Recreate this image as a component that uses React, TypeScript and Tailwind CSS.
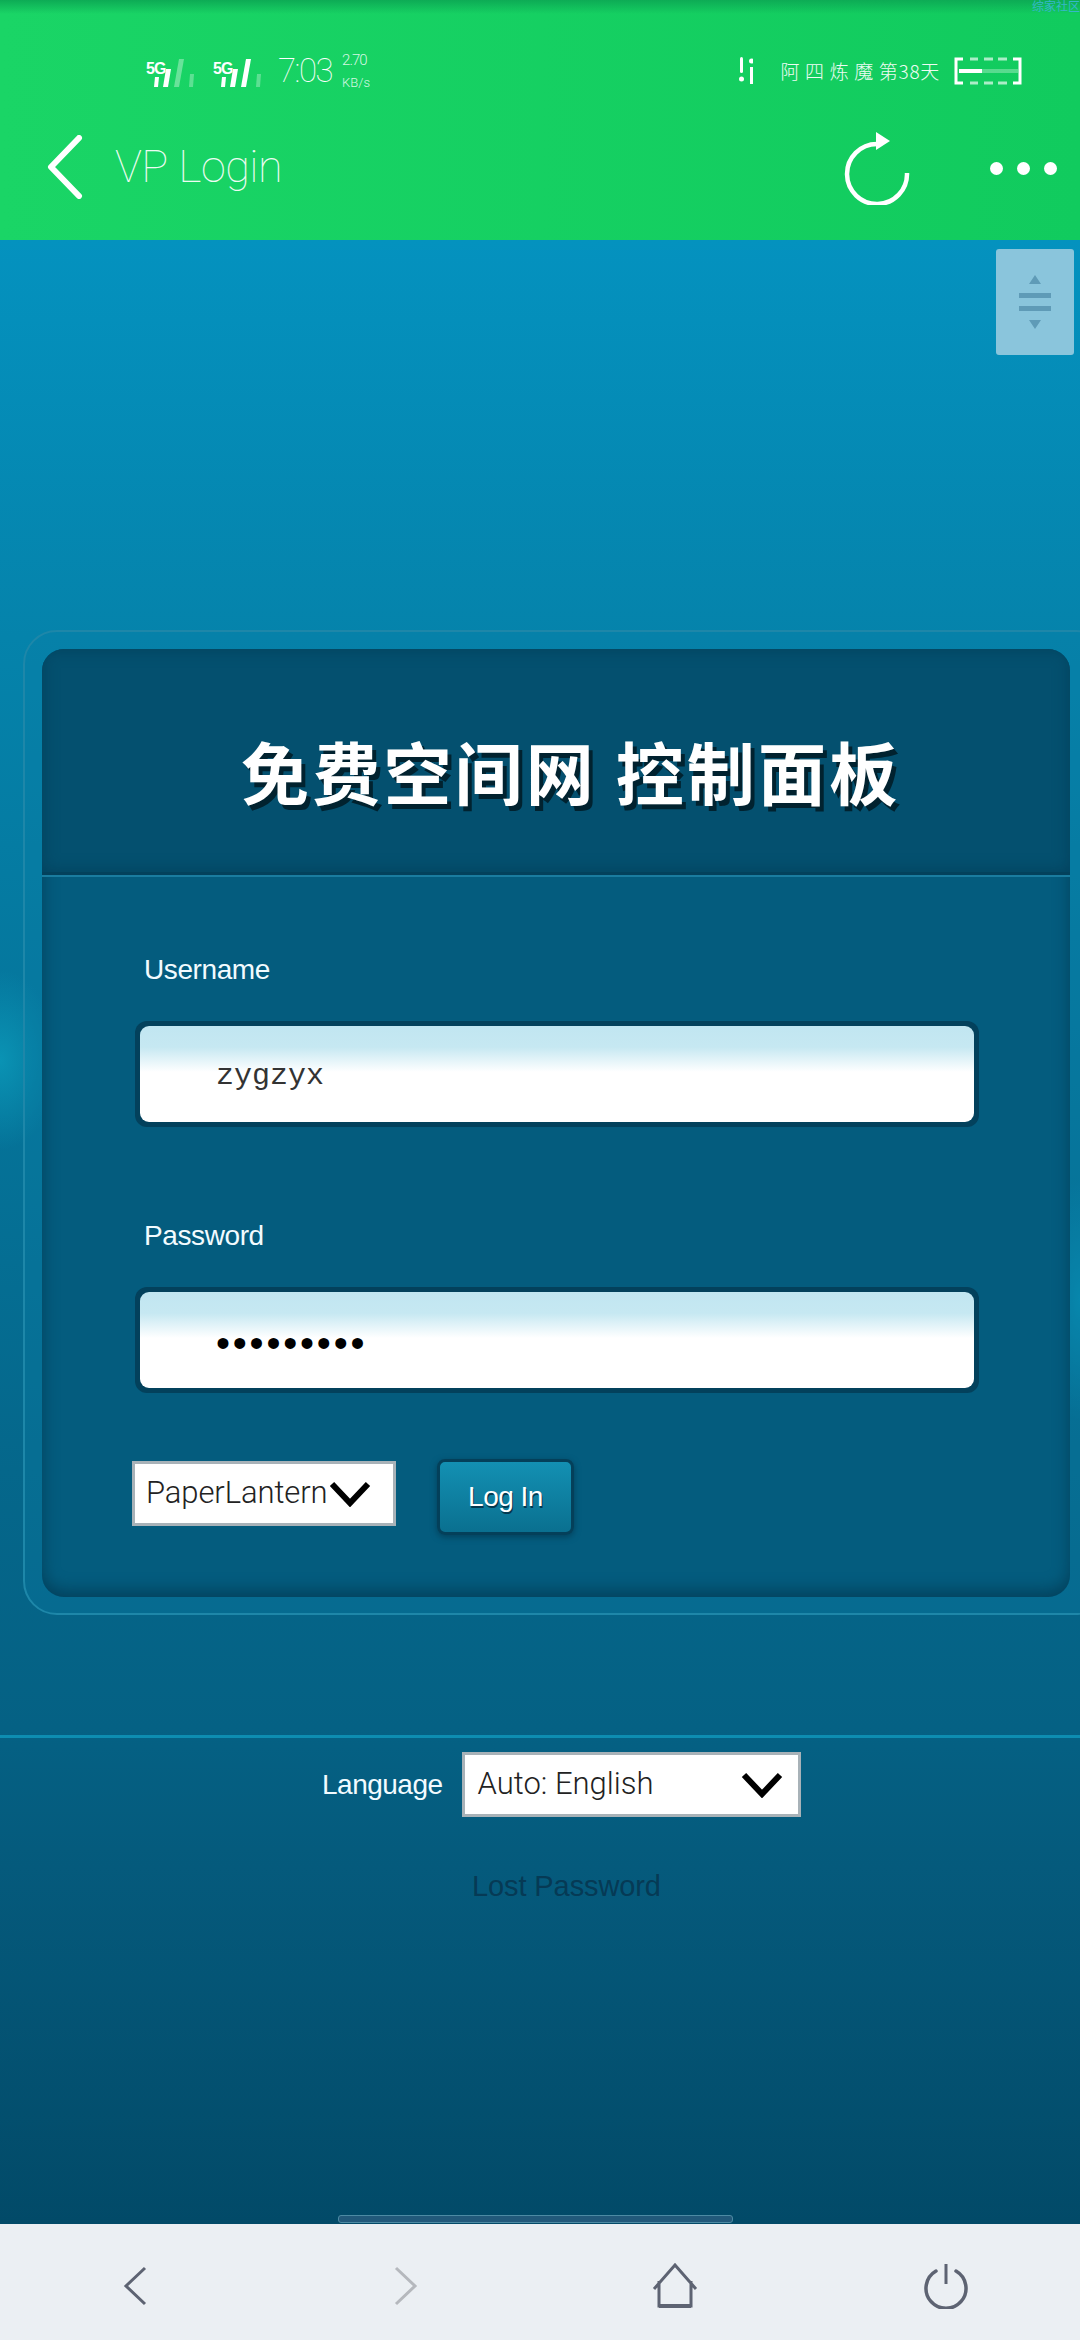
import React from "react";

const Signal = ({ dim }: { dim: number }) => (
  <svg width="54" height="30" viewBox="0 0 54 30" className="mt-[4px] shrink-0">
    <text x="0" y="16" fontFamily="Liberation Sans, sans-serif" fontSize="16" fontWeight="700" fill="#fff" letterSpacing="-1">5G</text>
    <path d="M9 19h4l-1 10H8z" fill="#fff" />
    <path d="M20 11h5l-3 18h-5z" fill="#fff" />
    <path d="M33 1h5l-5 28h-5z" fill="#fff" fillOpacity={dim} />
    <path d="M44 16h4l-1 13h-4z" fill="#fff" fillOpacity="0.3" />
  </svg>
);

const Chevron = () => (
  <svg width="42" height="26" viewBox="0 0 42 26" className="shrink-0">
    <path d="M3 3l18 19L39 3" fill="none" stroke="#000" strokeWidth="6" />
  </svg>
);

const Field = ({ label, children }: { label: string; children: React.ReactNode }) => (
  <div className="flex flex-col">
    <div className="h-[40px] pl-[3px] text-[28px] leading-[40px] tracking-[-0.4px] text-[#f2fbff] font-['Liberation_Sans',sans-serif]">{label}</div>
    <div className="mt-[31px] ml-[-6px] rounded-[12px] bg-[#03415c] p-[5px]">
      <div className="flex h-[96px] items-center rounded-[9px] bg-[linear-gradient(#c1e6f1_0%,#c6e8f2_22%,#ffffff_48%,#ffffff_100%)] pl-[76px]">
        {children}
      </div>
    </div>
  </div>
);

export default function App() {
  return (
    <div className="relative flex h-[2340px] w-[1080px] flex-col overflow-hidden font-['Liberation_Sans','Noto_Sans_CJK_SC',sans-serif]">
      {/* App header */}
      <header className="relative h-[240px] shrink-0 bg-[linear-gradient(90deg,#1ad566,#11cb5e)] text-white">
        <div className="absolute inset-x-0 top-0 h-[14px] bg-[linear-gradient(#0dab55,transparent)]" />
        <span className="absolute right-0 top-0 text-[12px] leading-[14px] text-[#36b7c9]">综家社区</span>
        <div className="flex h-[96px] items-center pl-[146px] pr-[58px] pt-[46px]">
          <Signal dim={0.35} />
          <div className="ml-[13px]"><Signal dim={1} /></div>
          <span className="ml-[11px] font-['Roboto',sans-serif] text-[33px] font-thin tracking-[-1.5px]">7:03</span>
          <div className="ml-[10px] flex flex-col font-['Roboto',sans-serif] font-light leading-[20px] text-[#d5f7e2]">
            <span className="mb-[3px] text-[15px] tracking-[-1px]">2.70</span>
            <span className="text-[13px]">KB/s</span>
          </div>
          <svg width="14" height="28" viewBox="0 0 14 28" className="ml-auto">
            <rect x="1" y="0" width="3" height="16" rx="1.5" fill="#fff" />
            <circle cx="2.5" cy="22" r="2.5" fill="#fff" />
            <rect x="11" y="10" width="3" height="17" fill="#fff" />
            <circle cx="12.5" cy="4" r="2.5" fill="#fff" />
          </svg>
          <span className="ml-[27px] font-['Noto_Sans_CJK_SC',sans-serif] text-[19px] font-light tracking-[0.7px] text-[#eefcf3]">阿 四 炼 魔 第38天</span>
          <svg width="68" height="28" viewBox="0 0 68 28" className="ml-[14px]">
            <path d="M9 2H2v24h7M59 2h7v24h-7" fill="none" stroke="#fff" strokeWidth="3" />
            <rect x="5" y="12" width="23" height="4" fill="#fff" />
            <rect x="28" y="12" width="36" height="4" fill="#fff" fillOpacity="0.3" />
            <path d="M16 2h8m6 0h9m5 0h9M16 26h8m6 0h9m5 0h9" stroke="#fff" strokeOpacity="0.65" strokeWidth="3" fill="none" />
          </svg>
        </div>
        <div className="flex h-[144px] items-center pb-[2px] pl-[47px] pr-[23px]">
          <svg width="36" height="64" viewBox="0 0 36 64">
            <path d="M32 3L4 32l28 29" fill="none" stroke="#fff" strokeWidth="6" strokeLinecap="round" strokeLinejoin="round" />
          </svg>
          <span className="ml-[32px] font-['Roboto',sans-serif] text-[45px] font-thin tracking-[-0.5px] text-[#eefcf3]">VP Login</span>
          <svg width="68" height="74" viewBox="0 0 68 74" className="ml-auto mt-[2px]">
            <path d="M64 42A30 30 0 1 1 34 13" fill="none" stroke="#fff" strokeWidth="4.5" />
            <path d="M33 1l14 9-14 9z" fill="#fff" />
          </svg>
          <div className="ml-[79px] mt-[2px] flex gap-[14px]">
            <span className="h-[13px] w-[13px] rounded-full bg-white" />
            <span className="h-[13px] w-[13px] rounded-full bg-white" />
            <span className="h-[13px] w-[13px] rounded-full bg-white" />
          </div>
        </div>
      </header>

      {/* Page */}
      <main className="relative flex min-h-0 flex-1 flex-col bg-[radial-gradient(ellipse_60px_90px_at_0px_820px,#0a93b4,transparent),radial-gradient(ellipse_40px_120px_at_1080px_1060px,#078bb0,transparent),linear-gradient(#0492bf_0%,#0583ab_20%,#05678b_62%,#056184_75%,#055a7c_82%,#024a68_100%)] pt-[390px]">
        {/* Floating scroller */}
        <div className="absolute right-[6px] top-[9px] flex h-[106px] w-[78px] flex-col items-center justify-center rounded-[3px] bg-[#8ac5dc]">
          <svg width="32" height="54" viewBox="0 0 32 54">
            <path d="M16 0l6 9H10zM16 54l-6-9h12z" fill="#5f9bb7" />
            <rect x="0" y="18" width="32" height="5" fill="#5f9bb7" />
            <rect x="0" y="31" width="32" height="5" fill="#5f9bb7" />
          </svg>
        </div>

        {/* Login panel */}
        <section className="ml-[23px] mr-[-30px] rounded-[34px] border-[2px] border-[#1e87a9] bg-[#0a7ea4]/30 pb-[16px] pl-[17px] pr-[38px] pt-[17px]">
          <div className="overflow-hidden rounded-[22px] bg-[#045c7e] shadow-[inset_0_-6px_16px_#03415c]">
            <div className="flex h-[226px] items-center border-b-[3px] border-[#03415c] bg-[#04506f] pl-[199px] pt-[20px] shadow-[inset_0_0_16px_#03415c,0_2px_0_#1a7c9f]">
              <h1 className="whitespace-nowrap text-[68px] font-bold leading-none tracking-[3.2px] text-white [text-shadow:4px_5px_0_#01222f] font-['Noto_Sans_CJK_SC',sans-serif]">
                免费空间网 控制面板
              </h1>
            </div>
            <div className="flex flex-col pb-[62px] pl-[99px] pr-[91px] pt-[75px]">
              <Field label="Username">
                <span className="mt-[5px] font-['Liberation_Mono',monospace] text-[30px] text-[#333]">zygzyx</span>
              </Field>
              <div className="mt-[89px]">
                <Field label="Password">
                  <span className="mt-[6px] font-['Liberation_Sans',sans-serif] text-[40px] leading-none tracking-[2.8px] text-black">•••••••••</span>
                </Field>
              </div>
              <div className="ml-[-9px] mt-[66px] flex items-start gap-[41px]">
                <div className="mt-[2px] flex h-[65px] w-[264px] items-center gap-[1px] border-[3px] border-[#a8b2b8] bg-white pl-[11px] pr-[14px] text-[#222]">
                  <span className="shrink-0 font-['Roboto',sans-serif] text-[31px] font-light tracking-[-0.1px]">PaperLantern</span>
                  <Chevron />
                </div>
                <button className="h-[76px] w-[137px] rounded-[8px] border-[3px] border-[#04405a] bg-[linear-gradient(#1390b3,#0a7090)] text-[28px] tracking-[-0.5px] text-white shadow-[0_2px_6px_#03415c] [text-shadow:1px_2px_0_#04384f]">
                  Log In
                </button>
              </div>
            </div>
          </div>
        </section>

        {/* Language */}
        <div className="mt-[120px] border-t-[3px] border-[#0d8db1]" />
        <div className="mt-[14px] flex items-center pl-[322px]">
          <span className="text-[28px] tracking-[-0.5px] text-[#f2fbff]">Language</span>
          <div className="ml-[19px] flex h-[65px] w-[339px] items-center justify-between border-[3px] border-[#a8b2b8] bg-white pl-[13px] pr-[15px] text-[#222]">
            <span className="font-['Roboto',sans-serif] text-[31px] font-light">Auto: English</span>
            <Chevron />
          </div>
        </div>
        <a className="ml-[472px] mt-[49px] text-[29px] leading-[40px] tracking-[-0.1px] text-[#063a55]">Lost Password</a>

        <div className="mb-[1px] ml-[338px] mt-auto h-[8px] w-[395px] rounded-[3px] border border-[#4d8aa3] bg-[#22597a]" />
      </main>

      {/* Bottom navigation */}
      <footer className="flex h-[116px] shrink-0 items-center bg-[#ebeff3] pl-[123px] pr-[111px] pt-[8px]">
        <svg width="24" height="40" viewBox="0 0 24 40">
          <path d="M22 2L3 20l19 18" fill="none" stroke="#5d6372" strokeWidth="3" />
        </svg>
        <svg width="24" height="40" viewBox="0 0 24 40" className="ml-[247px]">
          <path d="M2 2l19 18L2 38" fill="none" stroke="#b5b8bd" strokeWidth="3" />
        </svg>
        <svg width="46" height="46" viewBox="0 0 46 46" className="ml-[234px]">
          <path d="M2 26L23 2l21 24M7 18v25h32V18" fill="none" stroke="#5d6372" strokeWidth="3" />
          <path d="M7 43h32" stroke="#5d6372" strokeWidth="4" />
        </svg>
        <svg width="46" height="46" viewBox="0 0 46 46" className="ml-auto">
          <path d="M13 8a20 20 0 1 0 20 0" fill="none" stroke="#5d6372" strokeWidth="3.5" strokeLinecap="round" />
          <path d="M23 1v20" fill="none" stroke="#5d6372" strokeWidth="3" />
        </svg>
      </footer>
    </div>
  );
}
